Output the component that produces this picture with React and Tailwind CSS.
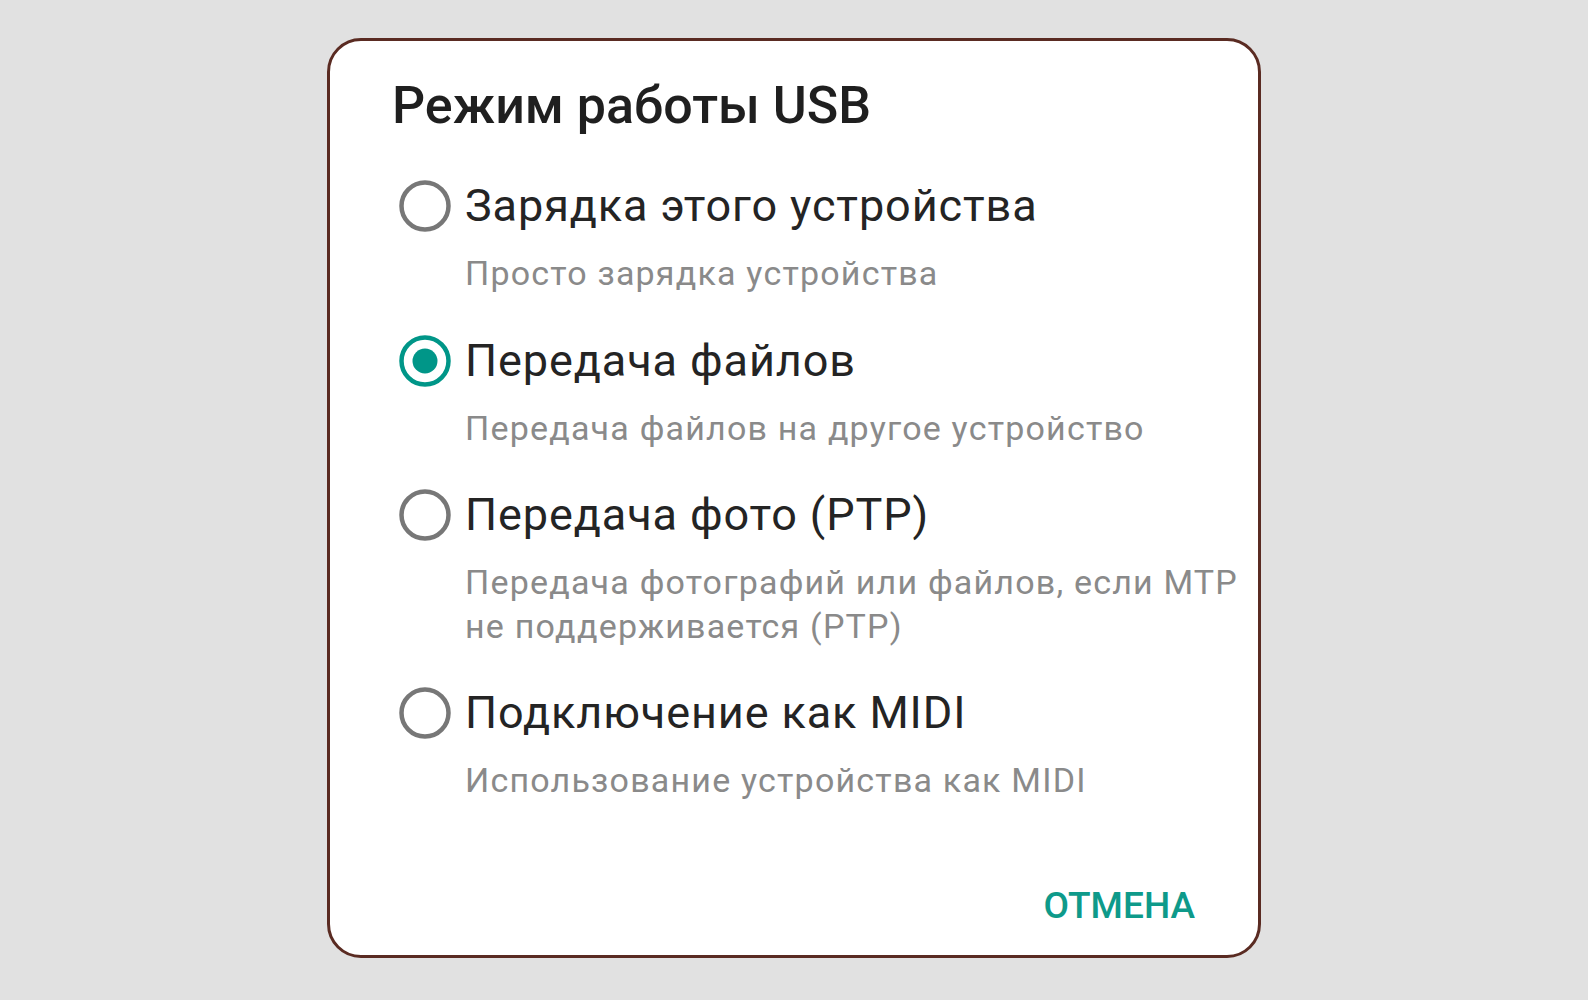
import { useState } from 'react';

const options = [
  { id: 'charge', title: 'Зарядка этого устройства', desc: ['Просто зарядка устройства'] },
  { id: 'mtp', title: 'Передача файлов', desc: ['Передача файлов на другое устройство'] },
  { id: 'ptp', title: 'Передача фото (PTP)', desc: ['Передача фотографий или файлов, если MTP', 'не поддерживается (PTP)'] },
  { id: 'midi', title: 'Подключение как MIDI', desc: ['Использование устройства как MIDI'] },
];

function Radio({ checked }) {
  return (
    <svg width="52" height="52" viewBox="0 0 52 52" className="shrink-0">
      <circle
        cx="26"
        cy="26"
        r="23.5"
        fill="none"
        stroke={checked ? '#009688' : '#777777'}
        strokeWidth="4.5"
      />
      {checked && <circle cx="26" cy="26" r="12.5" fill="#009688" />}
    </svg>
  );
}

export default function App() {
  const [selected, setSelected] = useState('mtp');

  return (
    <div
      className="min-h-screen bg-[#e1e1e1] flex justify-center pt-[38px]"
      style={{ fontFamily: 'Roboto, "Noto Sans", sans-serif' }}
    >
      <div className="w-[934px] h-[920px] bg-white border-[3px] border-[#5a2b22] rounded-[34px] flex flex-col pl-[62px] pr-[63px] pt-[35px] pb-[26px]">
        <h1 className="text-[52px] leading-[60px] font-medium text-[#1f1f1f]">Режим работы USB</h1>

        <div className="mt-[44px] flex flex-col gap-[39px]">
          {options.map((opt) => (
            <div key={opt.id} className="cursor-pointer" onClick={() => setSelected(opt.id)}>
              <div className="flex items-center gap-[14px] ml-[7px]">
                <Radio checked={selected === opt.id} />
                <span className="text-[45px] leading-[52px] tracking-[0.9px] text-[#242424] whitespace-nowrap">{opt.title}</span>
              </div>
              <div className="mt-[20px] pl-[73px] text-[34px] leading-[43.5px] tracking-[1.2px] text-[#8a8a8a] whitespace-nowrap">
                {opt.desc.map((line, i) => (
                  <div key={i}>{line}</div>
                ))}
              </div>
            </div>
          ))}
        </div>

        <div className="mt-auto flex justify-end">
          <button className="text-[37px] leading-[46px] font-medium text-[#0e9a8a]">ОТМЕНА</button>
        </div>
      </div>
    </div>
  );
}
